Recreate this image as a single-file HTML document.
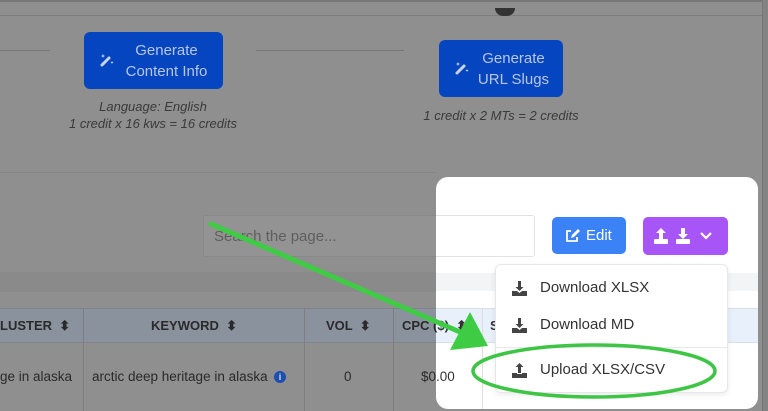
<!DOCTYPE html>
<html><head><style>
*{margin:0;padding:0;box-sizing:border-box}
body{width:768px;height:411px;overflow:hidden;background:#8f8f8f;font-family:"Liberation Sans",sans-serif;position:relative}
.a{position:absolute}
.btn{position:absolute;background:#0546c0;border-radius:6px;color:#b9c6e0;font-size:15px;line-height:21px;text-align:center}
.cap{position:absolute;font-style:italic;font-size:13px;color:#3a3a3a;text-align:center;width:260px}
.th{position:absolute;font-weight:bold;font-size:13px;color:#2a2a2a;top:318px}
.td{position:absolute;font-size:13.5px;color:#2a2a2a;top:369px}
.item{position:absolute;left:44px;font-size:15px;color:#333}
</style></head><body>
<div class="a" style="left:0;top:0;width:768px;height:2px;background:#777"></div>
<div class="a" style="left:0;top:15px;width:762px;height:1px;background:#7d7d7d"></div>
<div class="a" style="left:762px;top:0;width:6px;height:411px;background:#838383;border-left:1px solid #777"></div>
<div class="a" style="left:0;top:50px;width:50px;height:1px;background:#777"></div>
<div class="a" style="left:256px;top:50px;width:148px;height:1px;background:#777"></div>
<div class="a" style="top:8px;width:20px;height:8px;border-radius:0 0 10px 10px;background:#333;left:495px;"></div>
<div class="btn" style="left:84px;top:32px;width:139px;height:57px;padding:8px 0 0 26px">Generate<br>Content Info</div>
<svg class="a" style="left:99px;top:52px" width="16" height="16" viewBox="0 0 16 16"><path d="M3 13L10 6" stroke="#c9d3e8" stroke-width="3" stroke-linecap="round"/><path d="M4 2l.6 1.4L6 4l-1.4.6L4 6l-.6-1.4L2 4l1.4-.6zM13 9l.5 1 1 .5-1 .5-.5 1-.5-1-1-.5 1-.5z" fill="#c9d3e8"/></svg>
<div class="cap" style="left:23px;top:99px">Language: English</div>
<div class="cap" style="left:23px;top:116px">1 credit x 16 kws = 16 credits</div>
<div class="btn" style="left:439px;top:40px;width:124px;height:57px;padding:8px 0 0 25px">Generate<br>URL Slugs</div>
<svg class="a" style="left:454px;top:60px" width="16" height="16" viewBox="0 0 16 16"><path d="M3 13L10 6" stroke="#c9d3e8" stroke-width="3" stroke-linecap="round"/><path d="M4 2l.6 1.4L6 4l-1.4.6L4 6l-.6-1.4L2 4l1.4-.6zM13 9l.5 1 1 .5-1 .5-.5 1-.5-1-1-.5 1-.5z" fill="#c9d3e8"/></svg>
<div class="cap" style="left:371px;top:108px">1 credit x 2 MTs = 2 credits</div>
<div class="a" style="left:0;top:172px;width:436px;height:1px;background:#868686"></div>
<div class="a" style="left:203px;top:215px;width:260px;height:42px;background:#939393;border:1px solid #888;border-radius:3px;font-size:15px;color:#5e5e5e;padding:12px 0 0 10px">Search the page...</div>
<div class="a" style="left:0;top:272px;width:436px;height:20px;background:#8a8a8a"></div>
<div class="a" style="left:0;top:308px;width:436px;height:35px;background:#8a929d;border-top:1px solid #7d848e;border-bottom:1px solid #7d848e"></div>
<div class="a" style="left:83px;top:308px;width:1px;height:103px;background:#7e7e7e"></div>
<div class="a" style="left:304px;top:308px;width:1px;height:103px;background:#7e7e7e"></div>
<div class="a" style="left:393px;top:308px;width:1px;height:103px;background:#7e7e7e"></div>
<div class="th" style="left:0">LUSTER &nbsp;⬍</div>
<div class="th" style="left:151px">KEYWORD &nbsp;⬍</div>
<div class="th" style="left:326px">VOL &nbsp;⬍</div>
<div class="th" style="left:402px">CPC ($)</div>
<div class="td" style="left:0">ge in alaska</div>
<div class="td" style="left:92px">arctic deep heritage in alaska</div>
<div class="a" style="left:274px;top:371px;width:12px;height:12px;border-radius:50%;background:#1e4fb0;color:#ddd;font-size:9px;text-align:center;line-height:12px;font-weight:bold">i</div>
<div class="td" style="left:344px">0</div>
<div class="td" style="left:421px">$0.00</div>
<div class="a" style="left:436px;top:177px;width:322px;height:232px;background:#fff;border-radius:12px;overflow:hidden">
 <div class="a" style="left:-233px;top:38px;width:332px;height:42px;border:1px solid #e2e2e2;border-radius:3px"></div>
 <div class="a" style="left:0;top:96px;width:322px;height:18px;background:#f3f4f6"></div>
 <div class="a" style="left:0;top:131px;width:322px;height:35px;background:#e8f0fb;border-top:1px solid #d8dfe8;border-bottom:1px solid #d8dfe8"></div>
 <div class="a" style="left:46px;top:131px;width:1px;height:101px;background:#ddd"></div>
 <div class="a" style="left:-34px;top:141px;font-weight:bold;font-size:13px;color:#333">CPC ($) &nbsp;⬍</div>
 <div class="a" style="left:54px;top:141px;font-weight:bold;font-size:13px;color:#333">S</div>
 <div class="a" style="left:-15px;top:192px;font-size:13.5px;color:#333">$0.00</div>
 <div class="a" style="left:116px;top:40px;width:74px;height:37px;background:#3b82f6;border-radius:5px;color:#fff;font-size:15px;padding:10px 0 0 34px">Edit</div>
 <svg class="a" style="left:129px;top:52px" width="15" height="14" viewBox="0 0 15 14"><path d="M6 2H2v10h10V8" stroke="#fff" stroke-width="1.8" fill="none"/><path d="M6 9l1-3 6-6 2 2-6 6z" fill="#fff"/></svg>
 <div class="a" style="left:207px;top:40px;width:85px;height:38px;background:#a855f7;border-radius:5px"></div>
 <svg class="a" style="left:218px;top:51px" width="66" height="16" viewBox="0 0 66 16"><g fill="#fff"><path d="M7 0l5 5H9v6H5V5H2z"/><rect x="0" y="11" width="14" height="5" rx="1"/><path d="M29 11l5-5h-3V0h-4v6h-3z"/><rect x="22" y="11" width="14" height="5" rx="1"/></g><path d="M47 5l5 5 5-5" stroke="#fff" stroke-width="2.2" fill="none"/></svg>
 <div class="a" style="left:59px;top:87px;width:233px;height:129px;background:#fff;border:1px solid #e5e7eb;border-radius:6px;box-shadow:0 2px 6px rgba(0,0,0,.08)">
  <div class="a" style="left:0;top:82px;width:231px;height:1px;background:#e5e7eb"></div>
  <svg class="a" style="left:16px;top:16px" width="15" height="15" viewBox="0 0 15 15"><path d="M7.5 10l4-4H9V0H6v6H3.5z M0 10h5l2.5 2 2.5-2h5v5H0z" fill="#444"/></svg>
  <div class="item" style="top:14px">Download XLSX</div>
  <svg class="a" style="left:16px;top:53px" width="15" height="15" viewBox="0 0 15 15"><path d="M7.5 10l4-4H9V0H6v6H3.5z M0 10h5l2.5 2 2.5-2h5v5H0z" fill="#444"/></svg>
  <div class="item" style="top:51px">Download MD</div>
  <svg class="a" style="left:16px;top:98px" width="15" height="15" viewBox="0 0 15 15"><path d="M7.5 0l4 4H9v6H6V4H3.5z M0 10h5v1h5v-1h5v5H0z" fill="#444"/></svg>
  <div class="item" style="top:96px">Upload XLSX/CSV</div>
 </div>
</div>
<svg class="a" style="left:0;top:0" width="768" height="411">
 <line x1="211" y1="224" x2="460" y2="332" stroke="#3fcc45" stroke-width="5" stroke-linecap="round"/>
 <path d="M488 346L450 350L470 312Z" fill="#3fcc45"/>
 <ellipse cx="594" cy="371" rx="121" ry="26" fill="none" stroke="#3fc545" stroke-width="3.5"/>
</svg>
</body></html>
